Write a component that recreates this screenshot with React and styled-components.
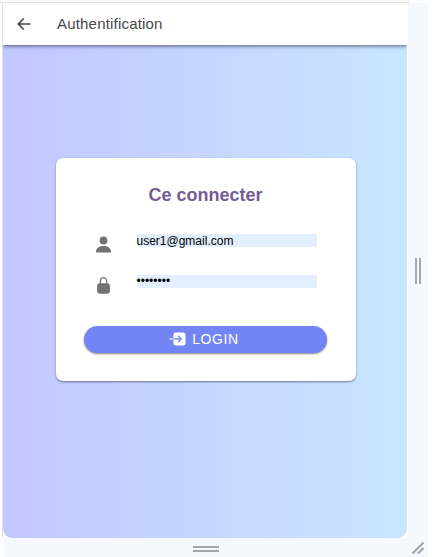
import React from "react";
import styled, { createGlobalStyle } from "styled-components";

const GlobalStyle = createGlobalStyle`
  * { box-sizing: border-box; }
  body { margin: 0; background: #fff; font-family: "Liberation Sans", Arial, sans-serif; }
`;

const Viewport = styled.div`
  width: 428px;
  height: 557px;
  padding-left: 2px;
  display: flex;
  flex-direction: column;
`;

const TopEdge = styled.div`
  flex: none;
  height: 3px;
  margin-left: -2px;
  background: #f8f8f8;
  border-bottom: 1px solid #e4e4e4;
  width: 409px;
`;

const Frame = styled.div`
  display: grid;
  flex: 1;
  grid-template-columns: 406px 20px;
  grid-template-rows: 535px 19px;
`;

const Device = styled.div`
  display: flex;
  flex-direction: column;
  padding-right: 1px;
  border-left: 1px solid #e2e2e2;
  background: #fff;
`;

const Toolbar = styled.header`
  position: relative;
  z-index: 1;
  flex: none;
  height: 42px;
  display: flex;
  align-items: center;
  padding-left: 11px;
  gap: 23px;
  background: #fff;
  color: #484848;
  box-shadow: 0 1px 4px rgba(25, 35, 70, 0.7);
  clip-path: inset(0 0 -8px 0);
`;

const Title = styled.h1`
  margin: 0;
  font-size: 15px;
  line-height: 20px;
  font-weight: 400;
  letter-spacing: 0.19px;
`;

const Content = styled.main`
  flex: 1;
  display: flex;
  justify-content: center;
  align-items: flex-start;
  padding: 112.5px 0 0 1px;
  border-radius: 0 0 9px 9px;
  background: linear-gradient(90deg, #c2c7ff, #c9e6ff);
`;

const Card = styled.section`
  width: 300px;
  height: 223px;
  padding: 26.5px 28.5px 0;
  border-radius: 7px;
  background: #fff;
  box-shadow: 0 1px 2px rgba(0, 20, 40, 0.5);
`;

const Heading = styled.h2`
  margin: 0 0 29px;
  text-align: center;
  color: #755b97;
  font-size: 18px;
  line-height: 22px;
  font-weight: 700;
`;

const Field = styled.div`
  display: flex;
  height: ${(p) => p.$height}px;
  padding-left: 9px;
  align-items: flex-start;
  color: #737373;
  svg { flex: none; }
`;

const Value = styled.span`
  width: 180px;
  height: 13px;
  margin: -1px 0 0 22.5px;
  background: #e3effe;
  color: #000;
  font-size: 12px;
  line-height: ${(p) => (p.$masked ? 12 : 15)}px;
  white-space: nowrap;
`;

const LoginButton = styled.button`
  display: flex;
  width: 243px;
  height: 27px;
  margin: 0;
  padding: 0 3px 1px 0;
  border: 0;
  border-radius: 14px;
  align-items: center;
  justify-content: center;
  gap: 6px;
  background: #7385f4;
  color: #fff;
  font: 14px/18px "Liberation Sans", Arial, sans-serif;
  letter-spacing: 0.6px;
  box-shadow: 0 1px 2px rgba(0, 0, 0, 0.48);
`;

const Gutter = styled.div`
  display: flex;
  align-items: center;
  justify-content: center;
  background: #f5f9ff;
  padding: ${(p) => p.$pad || 0};
  margin-left: ${(p) => p.$inset || 0};
`;

const Grip = styled.div`
  width: ${(p) => (p.$vertical ? 6 : 26)}px;
  height: ${(p) => (p.$vertical ? 26 : 6)}px;
  border: solid #a7a7a9;
  border-width: ${(p) => (p.$vertical ? "0 2px" : "2px 0")};
`;

export default function App() {
  return (
    <>
      <GlobalStyle />
      <Viewport>
        <TopEdge />
        <Frame>
          <Device>
            <Toolbar>
              <svg width="20" height="20" viewBox="0 0 20 20" fill="none" stroke="currentColor" strokeWidth="1.7">
                <path d="M16.4 10H4.5M9.7 4.5L4.3 10l5.4 5.5" />
              </svg>
              <Title>Authentification</Title>
            </Toolbar>
            <Content>
              <Card>
                <Heading>Ce connecter</Heading>
                <Field $height={41}>
                  <svg width="21" height="20" viewBox="0 0 21 20" fill="currentColor">
                    <circle cx="10.5" cy="5.5" r="3.9" />
                    <path d="M3.1 17.6v-1.2c0-3.4 3.2-5.4 7.4-5.4s7.4 2 7.4 5.4v1.2Z" />
                  </svg>
                  <Value>user1@gmail.com</Value>
                </Field>
                <Field $height={50}>
                  <svg width="21" height="20" viewBox="0 0 21 20">
                    <path d="M7.4 8.5V4.8a3.1 3.1 0 0 1 6.2 0v3.7" fill="none" stroke="currentColor" strokeWidth="1.3" />
                    <rect x="4.1" y="7.2" width="12.8" height="10.6" rx="2.8" fill="currentColor" />
                  </svg>
                  <Value $masked>••••••••</Value>
                </Field>
                <LoginButton type="button">
                  <svg width="17" height="14" viewBox="0 0 17 14" fill="none">
                    <rect x="4.5" y="0.5" width="12" height="13" rx="2.2" fill="#fff" />
                    <path d="M0.3 7h4.2" stroke="#dfe4ff" strokeWidth="1.5" />
                    <path d="M4.5 7h7.8M9 3.7L12.3 7 9 10.3" stroke="#7f8ff3" strokeWidth="1.4" />
                  </svg>
                  LOGIN
                </LoginButton>
              </Card>
            </Content>
          </Device>
          <Gutter>
            <Grip $vertical />
          </Gutter>
          <Gutter $pad="3px 0 0" $inset="1px">
            <Grip />
          </Gutter>
          <Gutter>
            <svg width="14" height="14" viewBox="0 0 14 14" fill="none" stroke="#a2a2a4" strokeWidth="2">
              <path d="M1.5 12.5l11-11M7 12.5l5.5-5.5" />
            </svg>
          </Gutter>
        </Frame>
      </Viewport>
    </>
  );
}
